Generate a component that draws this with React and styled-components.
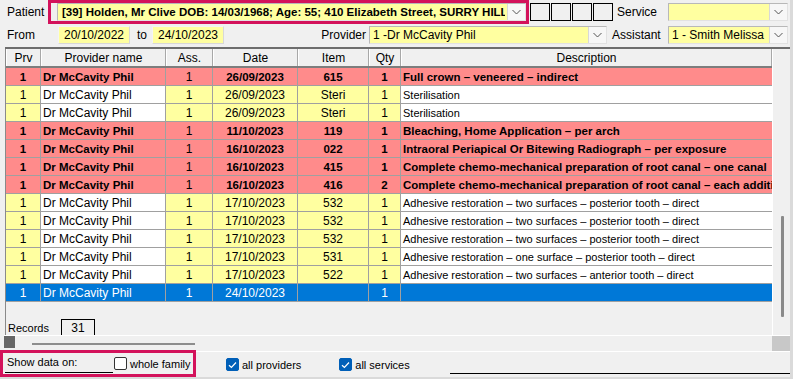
import React from "react";
import styled, { createGlobalStyle, css } from "styled-components";

const GlobalStyle = createGlobalStyle`
  html, body { margin: 0; padding: 0; background: #f0f0f0; }
  body { font-family: "Liberation Sans", Arial, sans-serif; font-size: 12px; color: #000; }
  * { box-sizing: border-box; }
`;

const YELLOW = "#ffffa0";
const PINK = "#ff8b8b";
const BLUE = "#0078d7";
const CRIMSON = "#d3125b";

const Root = styled.div`
  width: 793px;
  height: 379px;
  overflow: hidden;
  display: flex;
  flex-direction: column;
  border-right: 3px solid #dadada;
  border-bottom: 2px solid #dadada;
  & > * { flex: none; }
`;

const TopRow = styled.div`
  height: 24px;
  display: flex;
  align-items: center;
`;

const FilterRow = styled.div`
  height: 23px;
  display: flex;
  align-items: center;
  padding-bottom: 1px;
`;

const Label = styled.div`
  width: ${(p) => p.$w}px;
  padding-left: ${(p) => p.$pl || 0}px;
  padding-right: ${(p) => p.$pr || 0}px;
  text-align: ${(p) => p.$align || "left"};
  white-space: nowrap;
  flex: none;
`;

const Highlight = styled.div`
  border: 3px solid ${CRIMSON};
  height: 24px;
  width: ${(p) => p.$w}px;
  display: flex;
  align-items: center;
  padding-left: ${(p) => p.$pl || 0}px;
  flex: none;
`;

const Combo = styled.div`
  width: ${(p) => (p.$w ? `${p.$w}px` : "auto")};
  flex: ${(p) => (p.$w ? "none" : "1")};
  height: 18px;
  background: ${YELLOW};
  border: 1px solid #b8b8b8;
  border-right-color: #e2e2e2;
  border-bottom-color: #e2e2e2;
  display: flex;
  align-items: center;
  overflow: hidden;
`;

const ComboText = styled.div`
  flex: 1;
  padding-left: ${(p) => p.$pl || 3}px;
  white-space: nowrap;
  overflow: hidden;
  font-weight: ${(p) => (p.$bold ? 700 : 400)};
  font-size: ${(p) => (p.$bold ? 11.5 : 12)}px;
`;

const DropButton = styled.div`
  width: 18px;
  height: 16px;
  flex: none;
  margin-left: 2px;
  background: #f7f7f7;
  border-left: 1px solid #d8d8d8;
  display: flex;
  align-items: center;
  justify-content: center;
`;

const Squares = styled.div`
  display: flex;
  margin-left: 1px;
  flex: none;
`;

const Square = styled.div`
  width: 20px;
  height: 18px;
  border: 1px solid #000;
  margin-right: ${(p) => (p.$last ? 0 : 1)}px;
  background: #f0f0f0;
`;

const DateField = styled.div`
  width: ${(p) => p.$w}px;
  height: 18px;
  background: ${YELLOW};
  border: 1px solid #f4f4f4;
  border-right-color: #d8d8d8;
  border-bottom-color: #d8d8d8;
  display: flex;
  align-items: center;
  justify-content: center;
  flex: none;
`;

const GridFrame = styled.div`
  margin-left: 5px;
  width: 785px;
  border-top: 2px solid #6d6d6d;
  display: grid;
  grid-template-columns: 767px 18px;
  grid-template-rows: 286px 16px;
`;

const TableArea = styled.div`
  border-left: 1px solid #8a8a8a;
  display: flex;
  flex-direction: column;
  overflow: hidden;
  & > * { flex: none; }
`;

const COLS = "35px 125px 47px 85px 71px 32px 371px";

const HeaderRow = styled.div`
  display: grid;
  grid-template-columns: ${COLS};
  height: 19px;
  border-bottom: 2px solid #7d7d7d;
  background: #f0f0f0;
`;

const HeaderCell = styled.div`
  border-right: 1px solid #a8a8a8;
  border-left: 1px solid #ffffff;
  display: flex;
  align-items: center;
  justify-content: center;
  white-space: nowrap;
  overflow: hidden;
`;

const Row = styled.div`
  display: grid;
  grid-template-columns: ${COLS};
  height: 18px;
`;

const cellBg = (p) => {
  if (p.$kind === "sel") return BLUE;
  if (p.$kind === "hi") return PINK;
  return p.$white ? "#ffffff" : YELLOW;
};

const Cell = styled.div`
  background: ${cellBg};
  color: ${(p) => (p.$kind === "sel" ? "#fff" : "#000")};
  font-weight: ${(p) => (p.$kind === "hi" && !p.$light ? 700 : 400)};
  font-size: ${(p) => (p.$small ? 11 : p.$kind === "hi" && !p.$light ? 11.5 : 12)}px;
  border-right: 1px solid #a0a0a0;
  border-bottom: 1px solid #a0a0a0;
  display: flex;
  align-items: center;
  justify-content: ${(p) => (p.$left ? "flex-start" : "center")};
  padding-left: ${(p) => (p.$left ? 2 : 0)}px;
  white-space: nowrap;
  overflow: hidden;
  ${(p) =>
    p.$last &&
    css`
      border-right: none;
    `}
`;

const RecordsBar = styled.div`
  flex: 1 !important;
  display: flex;
  align-items: flex-end;
  padding-left: 2px;
  font-size: 11px;
`;

const RecordsLabel = styled.div`
  width: 53px;
  padding-bottom: 1px;
`;

const RecordsBox = styled.div`
  width: 34px;
  height: 16px;
  border: 1px solid #000;
  border-bottom: none;
  display: flex;
  align-items: center;
  justify-content: center;
  font-size: 12px;
`;

const VScroll = styled.div`
  border-left: 1px solid #ffffff;
  background: #f0f0f0;
  display: flex;
  justify-content: center;
  padding-left: 2px;
`;

const VThumb = styled.div`
  width: 3px;
  height: 101px;
  margin-top: 167px;
  background: #8a8a8a;
  border-radius: 1px;
`;

const HScroll = styled.div`
  border-top: 1px solid #ffffff;
  display: flex;
  align-items: flex-start;
  margin-left: -1px;
`;

const HBlock = styled.div`
  width: 11px;
  height: 12px;
  background: #666;
`;

const HThumb = styled.div`
  width: 163px;
  height: 2px;
  margin-top: 7px;
  margin-left: 17px;
  background: #8d8d8d;
`;

const Corner = styled.div`
  background: #c8c8c8;
  border-top: 1px solid #fff;
`;

const BottomBar = styled.div`
  height: 26px;
  border-top: 1px solid #ffffff;
  display: flex;
  align-items: center;
  font-size: 11px;
`;

const BottomHighlight = styled.div`
  border: 3px solid ${CRIMSON};
  height: 27px;
  margin-top: -2px;
  width: 196px;
  display: flex;
  align-items: center;
  flex: none;
`;

const ShowLabel = styled.div`
  margin-left: 2px;
  width: 108px;
  height: 20px;
  padding-left: 2px;
  padding-top: 3px;
  border-bottom: 1px solid #000;
  align-self: flex-end;
  margin-bottom: 1px;
`;

const CheckItem = styled.label`
  display: flex;
  align-items: center;
  margin-left: ${(p) => p.$ml || 0}px;
  gap: 3px;
  white-space: nowrap;
  flex: none;
`;

const Box = styled.span`
  width: 13px;
  height: 13px;
  border-radius: 2px;
  display: inline-flex;
  align-items: center;
  justify-content: center;
  background: ${(p) => (p.$checked ? "#005fb8" : "#fff")};
  border: 1px solid ${(p) => (p.$checked ? "#005fb8" : "#333")};
`;

const TailLine = styled.div`
  flex: 1;
  align-self: flex-end;
  margin-bottom: 3px;
  margin-left: 40px;
  height: 1px;
  background: #000;
`;

const Chevron = () => (
  <svg width="9" height="6" viewBox="0 0 9 6">
    <path d="M0.5 1 L4.5 5 L8.5 1" fill="none" stroke="#555" strokeWidth="1" />
  </svg>
);

const Check = () => (
  <svg width="9" height="8" viewBox="0 0 9 8">
    <path d="M1 4.2 L3.4 6.5 L8 1.5" fill="none" stroke="#fff" strokeWidth="1.2" />
  </svg>
);

const rows = [
  { k: "hi", date: "26/09/2023", item: "615", qty: "1", desc: "Full crown – veneered – indirect" },
  { k: "n", date: "26/09/2023", item: "Steri", qty: "1", desc: "Sterilisation" },
  { k: "n", date: "26/09/2023", item: "Steri", qty: "1", desc: "Sterilisation" },
  { k: "hi", date: "11/10/2023", item: "119", qty: "1", desc: "Bleaching, Home Application – per arch" },
  { k: "hi", date: "16/10/2023", item: "022", qty: "1", desc: "Intraoral Periapical Or Bitewing Radiograph – per exposure" },
  { k: "hi", date: "16/10/2023", item: "415", qty: "1", desc: "Complete chemo-mechanical preparation of root canal – one canal" },
  { k: "hi", date: "16/10/2023", item: "416", qty: "2", desc: "Complete chemo-mechanical preparation of root canal – each additional canal" },
  { k: "n", date: "17/10/2023", item: "532", qty: "1", desc: "Adhesive restoration – two surfaces – posterior tooth – direct" },
  { k: "n", date: "17/10/2023", item: "532", qty: "1", desc: "Adhesive restoration – two surfaces – posterior tooth – direct" },
  { k: "n", date: "17/10/2023", item: "532", qty: "1", desc: "Adhesive restoration – two surfaces – posterior tooth – direct" },
  { k: "n", date: "17/10/2023", item: "531", qty: "1", desc: "Adhesive restoration – one surface – posterior tooth – direct" },
  { k: "n", date: "17/10/2023", item: "522", qty: "1", desc: "Adhesive restoration – two surfaces – anterior tooth – direct" },
  { k: "sel", date: "24/10/2023", item: "", qty: "1", desc: "" },
];

const headers = ["Prv", "Provider name", "Ass.", "Date", "Item", "Qty", "Description"];

export default function App() {
  return (
    <>
      <GlobalStyle />
      <Root>
        <TopRow>
          <Label $w={48} $pl={7}>Patient</Label>
          <Highlight $w={481} $pl={6}>
            <Combo>
              <ComboText $pl={4} $bold>
                [39] Holden, Mr Clive DOB: 14/03/1968; Age: 55; 410 Elizabeth Street, SURRY HILLS
              </ComboText>
              <DropButton><Chevron /></DropButton>
            </Combo>
          </Highlight>
          <Squares>
            <Square />
            <Square />
            <Square />
            <Square $last />
          </Squares>
          <Label $w={55} $pl={4}>Service</Label>
          <Combo $w={120}>
            <ComboText />
            <DropButton><Chevron /></DropButton>
          </Combo>
        </TopRow>
        <FilterRow>
          <Label $w={58} $pl={7}>From</Label>
          <DateField $w={72}>20/10/2022</DateField>
          <Label $w={22} $pl={7}>to</Label>
          <DateField $w={72}>24/10/2023</DateField>
          <Label $w={145} $align="right" $pr={3}>Provider</Label>
          <Combo $w={238}>
            <ComboText>1 -Dr McCavity Phil</ComboText>
            <DropButton><Chevron /></DropButton>
          </Combo>
          <Label $w={61} $pl={5}>Assistant</Label>
          <Combo $w={120}>
            <ComboText>1 - Smith Melissa</ComboText>
            <DropButton><Chevron /></DropButton>
          </Combo>
        </FilterRow>
        <GridFrame>
          <TableArea>
            <HeaderRow>
              {headers.map((h) => (
                <HeaderCell key={h}>{h}</HeaderCell>
              ))}
            </HeaderRow>
            {rows.map((r, i) => (
              <Row key={i}>
                <Cell $kind={r.k}>1</Cell>
                <Cell $kind={r.k} $white $left>Dr McCavity Phil</Cell>
                <Cell $kind={r.k} $light>1</Cell>
                <Cell $kind={r.k}>{r.date}</Cell>
                <Cell $kind={r.k}>{r.item}</Cell>
                <Cell $kind={r.k}>{r.qty}</Cell>
                <Cell $kind={r.k} $white $left $last $small={r.k === "n"}>{r.desc}</Cell>
              </Row>
            ))}
            <RecordsBar>
              <RecordsLabel>Records</RecordsLabel>
              <RecordsBox>31</RecordsBox>
            </RecordsBar>
          </TableArea>
          <VScroll>
            <VThumb />
          </VScroll>
          <HScroll>
            <HBlock />
            <HThumb />
          </HScroll>
          <Corner />
        </GridFrame>
        <BottomBar>
          <BottomHighlight>
            <ShowLabel>Show data on:</ShowLabel>
            <CheckItem $ml={1}>
              <Box />
              whole family
            </CheckItem>
          </BottomHighlight>
          <CheckItem $ml={30}>
            <Box $checked><Check /></Box>
            all providers
          </CheckItem>
          <CheckItem $ml={38}>
            <Box $checked><Check /></Box>
            all services
          </CheckItem>
          <TailLine />
        </BottomBar>
      </Root>
    </>
  );
}
